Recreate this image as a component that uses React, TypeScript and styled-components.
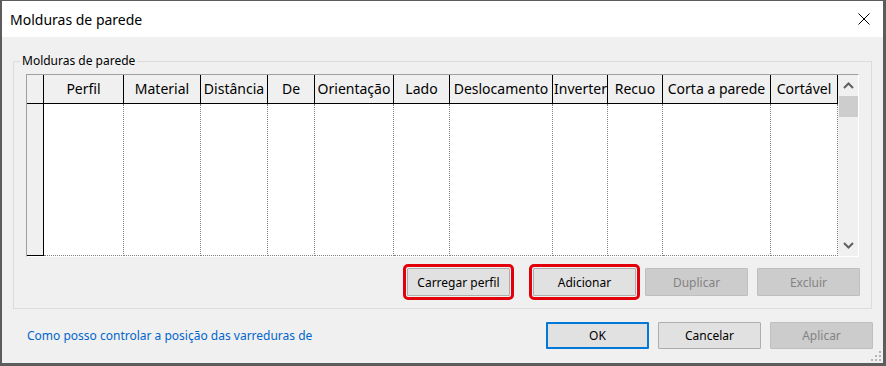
import React from "react";
import styled, { createGlobalStyle, css } from "styled-components";

const GlobalStyle = createGlobalStyle`
  html, body {
    margin: 0;
    padding: 0;
    background: #ffffff;
  }
  body {
    font-family: "Noto Sans", "Liberation Sans", sans-serif;
  }
`;

const Window = styled.div`
  position: relative;
  width: 886px;
  height: 366px;
  box-sizing: border-box;
  display: flex;
  flex-direction: column;
  background: #f0f0f0;
  border-style: solid;
  border-color: #5c5c5c;
  border-width: 1px 3px 3px 2px;
`;

const TitleBar = styled.div`
  height: 36px;
  flex: none;
  display: flex;
  align-items: center;
  justify-content: space-between;
  padding-left: 8px;
  background: #ffffff;
`;

const Title = styled.span`
  font-size: 14px;
  color: #000000;
`;

const Close = styled.div`
  width: 38px;
  height: 36px;
  display: flex;
  align-items: center;
  justify-content: center;
`;

const Body = styled.div`
  flex: 1;
  display: flex;
  flex-direction: column;
  padding: 16px 10px 0 11px;
`;

const Group = styled.fieldset`
  margin: 0 1px 0 0;
  padding: 5px 12px 12px 12px;
  min-width: 0;
  border: 1px solid #dcdcdc;
`;

const Legend = styled.legend`
  margin-left: -6px;
  padding: 0 2px;
  font-size: 12px;
  line-height: 16px;
  color: #000000;
`;

const Frame = styled.div`
  display: flex;
  height: 183px;
  box-sizing: border-box;
  border-style: solid;
  border-width: 1px;
  border-color: #a0a0a0 #ffffff #ffffff #a0a0a0;
`;

const columns = "17px 80px 77px 67px 47px 79px 56px 103px 55px 55px 108px 67px";

const Grid = styled.div`
  width: 811px;
  display: grid;
  grid-template-columns: ${columns};
  grid-template-rows: 29px 152px;
  background: #ffffff;
`;

const HeadCell = styled.div`
  box-sizing: border-box;
  padding: 0 1px;
  background: #f0f0f0;
  border-right: 1px solid #000000;
  border-bottom: 1px solid #000000;
  font-size: 14px;
  line-height: 28px;
  text-align: center;
  white-space: nowrap;
  overflow: hidden;
  color: #000000;
`;

const BodyCell = styled.div<{ $rowHead?: boolean }>`
  box-sizing: border-box;
  ${(p) =>
    p.$rowHead
      ? css`
          background: #f0f0f0;
          border-right: 1px solid #000000;
          border-bottom: 1px solid #000000;
        `
      : css`
          background: #ffffff;
          border-right: 1px dotted #808080;
          border-bottom: 1px dotted #808080;
        `}
`;

const Scrollbar = styled.div`
  width: 21px;
  display: flex;
  flex-direction: column;
  align-items: center;
  background: #f0f0f0;
`;

const Arrow = styled.div`
  height: 21px;
  width: 100%;
  display: flex;
  align-items: center;
  justify-content: center;
`;

const Thumb = styled.div`
  width: 19px;
  height: 21px;
  background: #cdcdcd;
`;

const Track = styled.div`
  flex: 1;
`;

const ButtonRow = styled.div`
  display: flex;
  justify-content: flex-end;
  gap: 9px;
  margin-top: 11px;
  margin-right: -1px;
`;

type Variant = "default" | "primary" | "disabled";

const Button = styled.button<{ $variant?: Variant; $marked?: boolean; $spaced?: boolean; $short?: boolean }>`
  width: 103px;
  height: ${(p) => (p.$short ? "27px" : "28px")};
  box-sizing: border-box;
  padding: 0;
  font-family: inherit;
  font-size: 12px;
  color: #000000;
  background: #e1e1e1;
  border: 1px solid #adadad;
  border-radius: 1px;
  margin-right: ${(p) => (p.$spaced ? "14px" : "0")};
  ${(p) =>
    p.$variant === "primary" &&
    css`
      border: 2px solid #0078d7;
    `}
  ${(p) =>
    p.$variant === "disabled" &&
    css`
      color: #838383;
      background: #cccccc;
      border-color: #bfbfbf;
    `}
  ${(p) =>
    p.$marked &&
    css`
      outline: 3px solid #e3000b;
      outline-offset: 1px;
    `}
`;

const Footer = styled.div`
  display: flex;
  align-items: center;
  gap: 9px;
  margin-top: 13px;
  height: 27px;
`;

const HelpLink = styled.a`
  flex: 1;
  margin-left: 14px;
  font-size: 12px;
  color: #0066cc;
  text-decoration: none;
`;

const Grip = styled.svg`
  position: absolute;
  right: 1px;
  bottom: 1px;
`;

const headers = [
  "Perfil",
  "Material",
  "Distância",
  "De",
  "Orientação",
  "Lado",
  "Deslocamento",
  "Inverter",
  "Recuo",
  "Corta a parede",
  "Cortável",
];

function Chevron({ up }: { up?: boolean }) {
  return (
    <svg width="11" height="7" viewBox="0 0 11 7">
      <path
        d={up ? "M1 6 L5.5 1.5 L10 6" : "M1 1 L5.5 5.5 L10 1"}
        fill="none"
        stroke="#606060"
        strokeWidth="2"
      />
    </svg>
  );
}

export default function App() {
  return (
    <>
      <GlobalStyle />
      <Window>
        <TitleBar>
          <Title>Molduras de parede</Title>
          <Close>
            <svg width="12" height="12" viewBox="0 0 12 12">
              <path d="M0.5 0.5 L11.5 11.5 M11.5 0.5 L0.5 11.5" stroke="#000" strokeWidth="1" />
            </svg>
          </Close>
        </TitleBar>

        <Body>
          <Group>
            <Legend>Molduras de parede</Legend>
            <Frame>
              <Grid>
                <HeadCell />
                {headers.map((h) => (
                  <HeadCell key={h}>{h}</HeadCell>
                ))}
                <BodyCell $rowHead />
                {headers.map((h) => (
                  <BodyCell key={h} />
                ))}
              </Grid>
              <Scrollbar>
                <Arrow>
                  <Chevron up />
                </Arrow>
                <Thumb />
                <Track />
                <Arrow>
                  <Chevron />
                </Arrow>
              </Scrollbar>
            </Frame>
            <ButtonRow>
              <Button $marked $spaced>
                Carregar perfil
              </Button>
              <Button $marked>Adicionar</Button>
              <Button $variant="disabled">Duplicar</Button>
              <Button $variant="disabled">Excluir</Button>
            </ButtonRow>
          </Group>

          <Footer>
            <HelpLink href="#">Como posso controlar a posição das varreduras de</HelpLink>
            <Button $variant="primary" $short>OK</Button>
            <Button $short>Cancelar</Button>
            <Button $variant="disabled" $short>Aplicar</Button>
          </Footer>
        </Body>

        <Grip width="11" height="11" viewBox="0 0 11 11">
          <rect x="8" y="0" width="2" height="2" fill="#b4b4b4" />
          <rect x="4" y="4" width="2" height="2" fill="#b4b4b4" />
          <rect x="8" y="4" width="2" height="2" fill="#b4b4b4" />
          <rect x="0" y="8" width="2" height="2" fill="#b4b4b4" />
          <rect x="4" y="8" width="2" height="2" fill="#b4b4b4" />
          <rect x="8" y="8" width="2" height="2" fill="#b4b4b4" />
        </Grip>
      </Window>
    </>
  );
}
